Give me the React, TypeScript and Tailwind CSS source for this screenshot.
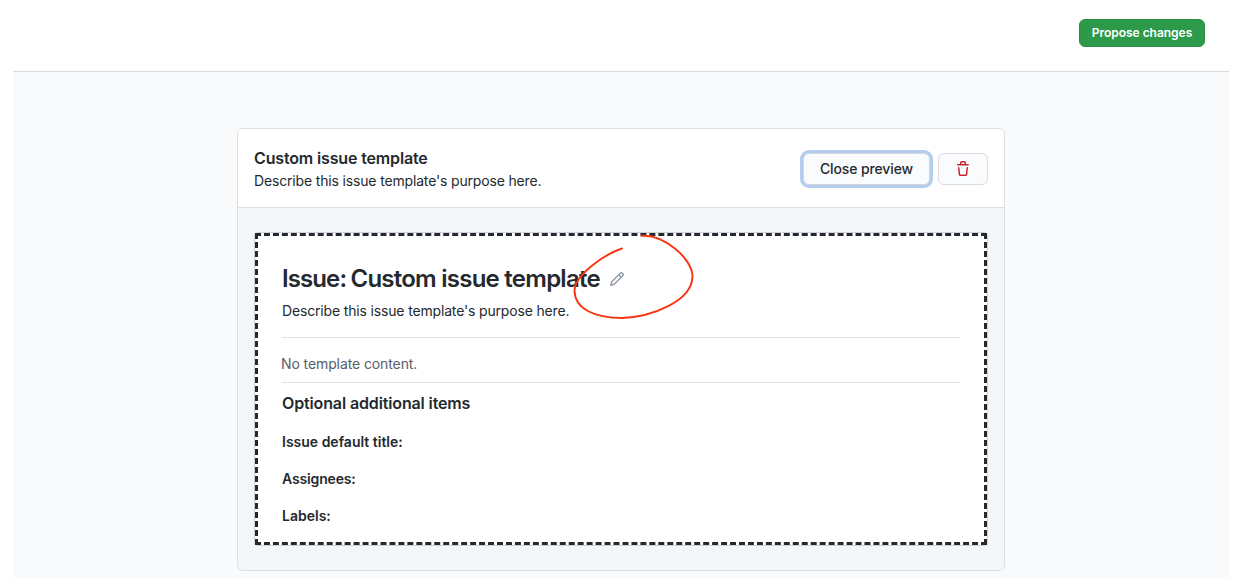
import React from "react";

function TrashIcon() {
  return (
    <svg width="16" height="16" viewBox="0 0 16 16" fill="#cb2431" aria-hidden="true">
      <path
        fillRule="evenodd"
        d="M6.5 1.75a.25.25 0 01.25-.25h2.5a.25.25 0 01.25.25V3h-3V1.75zm4.5 0V3h2.25a.75.75 0 010 1.5H2.75a.75.75 0 010-1.5H5V1.75C5 .784 5.784 0 6.75 0h2.5C10.216 0 11 .784 11 1.75zM4.496 6.675a.75.75 0 10-1.492.15l.66 6.6A1.75 1.75 0 005.405 15h5.19c.9 0 1.652-.681 1.741-1.576l.66-6.6a.75.75 0 00-1.492-.149l-.66 6.6a.25.25 0 01-.249.225h-5.19a.25.25 0 01-.249-.225l-.66-6.6z"
      />
    </svg>
  );
}

function PencilIcon() {
  return (
    <svg width="16" height="16" viewBox="0 0 16 16" fill="#959da5" aria-hidden="true">
      <path
        fillRule="evenodd"
        d="M11.013 1.427a1.75 1.75 0 012.474 0l1.086 1.086a1.75 1.75 0 010 2.474l-8.61 8.61c-.21.21-.47.364-.756.445l-3.251.93a.75.75 0 01-.927-.928l.929-3.25a1.75 1.75 0 01.445-.758l8.61-8.61zm1.414 1.06a.25.25 0 00-.354 0L10.811 3.75l1.439 1.44 1.263-1.263a.25.25 0 000-.354l-1.086-1.086zM11.189 6.25L9.75 4.81l-6.286 6.287a.25.25 0 00-.064.108l-.558 1.953 1.953-.558a.249.249 0 00.108-.064l6.286-6.286z"
      />
    </svg>
  );
}

function HandDrawnCircle() {
  return (
    <svg
      className="pointer-events-none absolute -top-[6px] left-[311px]"
      width="130"
      height="92"
      viewBox="569 230 130 92"
      fill="none"
    >
      <path
        d="M622 248.5C605 254 574.5 275 574.5 291C575 309 595 318 622 318C650 317 692.5 302 692.5 276C692 258 663 234 641.5 235.8"
        stroke="#fa3412"
        strokeWidth="1.9"
        strokeLinecap="round"
      />
    </svg>
  );
}

export default function App() {
  return (
    <div className="flex h-[578px] flex-col overflow-hidden bg-white px-[13px] pr-[14px] font-['Inter','Liberation_Sans',sans-serif] text-sm text-[#24292e]">
      <header className="flex h-[72px] shrink-0 justify-end border-b border-[#d9dde1] pt-[19px] pr-6">
        <button className="h-7 w-[126px] rounded-md border border-[#2a8f47] bg-[#2c9a48] text-[12px] leading-5 font-semibold tracking-[-0.02px] whitespace-nowrap text-white">
          Propose changes
        </button>
      </header>
      <main className="flex-1 bg-[#f9fafc] pt-14 pl-[224px]">
        <section className="h-[443px] w-[768px] overflow-hidden rounded-md border border-[#dcdfe3] bg-[#f5f6f8]">
          <div className="flex h-[79px] items-start justify-between border-b border-[#dcdfe3] bg-white px-4">
            <div className="pt-[17px]">
              <h3 className="text-[16px] leading-6 font-semibold tracking-[-0.15px]">Custom issue template</h3>
              <p className="text-[14px] leading-[21px] tracking-[-0.16px]">Describe this issue template's purpose here.</p>
            </div>
            <div className="flex gap-2 pt-6">
              <button className="h-8 w-[127px] rounded-md border border-[#d4d6d9] bg-[#fafbfc] text-[14px] leading-5 font-medium tracking-[-0.12px] whitespace-nowrap shadow-[0_0_0_3px_#b3cdef]">
                Close preview
              </button>
              <button aria-label="Delete" className="flex h-8 w-[50px] items-center justify-center rounded-md border border-[#d9dbde] bg-[#fafbfc]">
                <TrashIcon />
              </button>
            </div>
          </div>
          <div className="px-4 pt-6">
            <div className="h-[314px] rounded border border-[#cfd3d8] bg-white">
              <div className="relative h-[312px] border-[3px] border-dashed border-[#24292e] pr-6 pl-6">
                <div className="flex items-center pt-[25px]">
                  <h1 className="text-[24px] leading-9 font-semibold tracking-[-0.75px] whitespace-nowrap">
                    <span className="-mr-px tracking-[-0.9px]">Issue:</span> Custom issue template
                  </h1>
                  <span className="ml-[9px]">
                    <PencilIcon />
                  </span>
                </div>
                <p className="mt-[3px] text-[14px] leading-[21px] tracking-[-0.16px]">Describe this issue template's purpose here.</p>
                <div className="mt-4 border-t border-[#dcdfe6]" />
                <p className="-ml-px pt-[15px] text-[14px] leading-[21px] tracking-[-0.1px] text-[#586069]">No template content.</p>
                <div className="mt-2 border-t border-[#dcdfe6]" />
                <h3 className="mt-2 text-[16px] leading-6 font-semibold tracking-[-0.13px]">Optional additional items</h3>
                <div className="mt-4 flex flex-col gap-4 text-[14px] leading-[21px] font-semibold">
                  <p>Issue default title:</p>
                  <p className="tracking-[-0.15px]">Assignees:</p>
                  <p>Labels:</p>
                </div>
                <HandDrawnCircle />
              </div>
            </div>
          </div>
        </section>
      </main>
    </div>
  );
}
